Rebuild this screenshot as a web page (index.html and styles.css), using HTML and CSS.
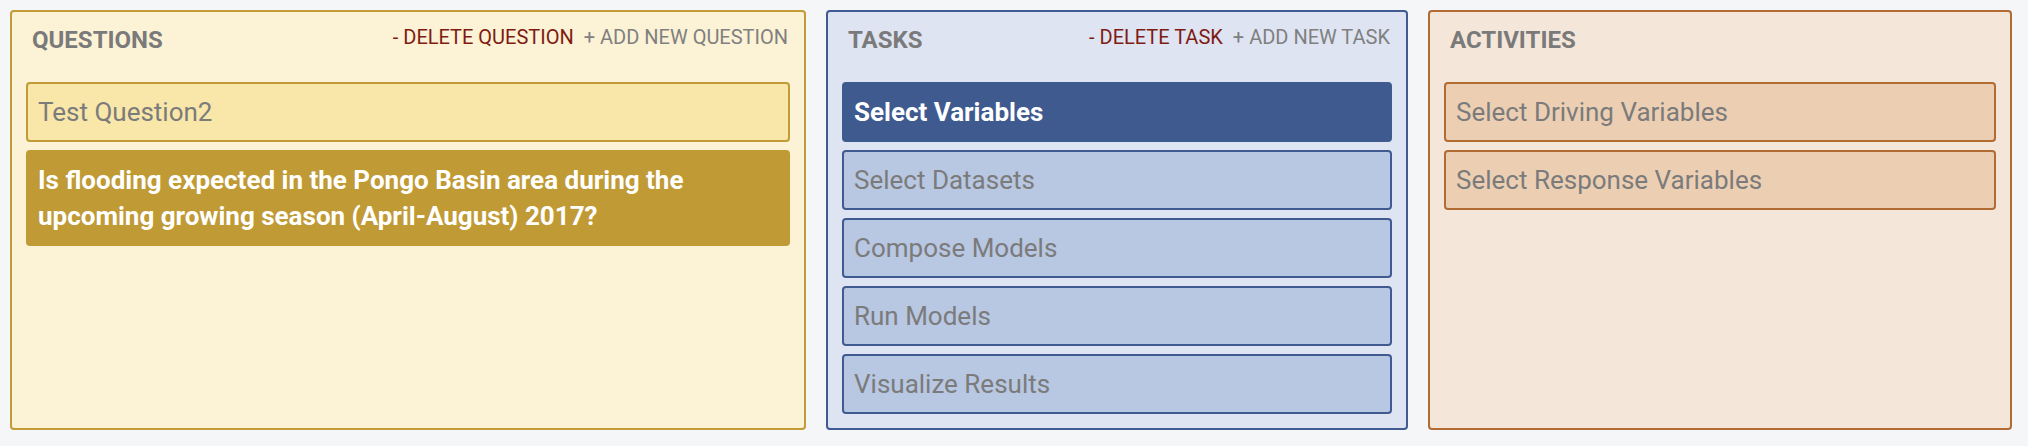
FILE: index.html
```html
<!DOCTYPE html>
<html>
<head>
<meta charset="utf-8">
<link rel="stylesheet" href="styles.css">
</head>
<body>
<div class="board">
  <section class="panel panel-questions">
    <div class="panel-header">
      <div class="panel-title">QUESTIONS</div>
      <div class="panel-actions">
        <span class="action action-delete">- DELETE QUESTION</span>
        <span class="action action-add">+ ADD NEW QUESTION</span>
      </div>
    </div>
    <div class="item-list">
      <div class="item">Test Question2</div>
      <div class="item item-active">Is flooding expected in the Pongo Basin area during the upcoming growing season (April-August) 2017?</div>
    </div>
  </section>
  <section class="panel panel-tasks">
    <div class="panel-header">
      <div class="panel-title">TASKS</div>
      <div class="panel-actions">
        <span class="action action-delete">- DELETE TASK</span>
        <span class="action action-add">+ ADD NEW TASK</span>
      </div>
    </div>
    <div class="item-list">
      <div class="item item-active">Select Variables</div>
      <div class="item">Select Datasets</div>
      <div class="item">Compose Models</div>
      <div class="item">Run Models</div>
      <div class="item">Visualize Results</div>
    </div>
  </section>
  <section class="panel panel-activities">
    <div class="panel-header">
      <div class="panel-title">ACTIVITIES</div>
    </div>
    <div class="item-list">
      <div class="item">Select Driving Variables</div>
      <div class="item">Select Response Variables</div>
    </div>
  </section>
</div>
</body>
</html>
```
FILE: styles.css
```css
html, body {
  margin: 0;
  padding: 0;
  background: #f4f6f8;
  font-family: Roboto, "Liberation Sans", Arial, sans-serif;
}

.board {
  display: flex;
  gap: 20px;
  padding: 10px 0 0 10px;
  align-items: flex-start;
}

.panel {
  box-sizing: border-box;
  height: 420px;
  border: 2px solid;
  border-radius: 4px;
  padding: 10px 14px 14px;
  display: flex;
  flex-direction: column;
}

.panel-questions { width: 796px; background: #fcf2d5; border-color: #c39b36; }
.panel-tasks { width: 582px; background: #dee4f2; border-color: #3f5b91; }
.panel-activities { width: 584px; background: #f4e6d9; border-color: #b26b32; }

.panel-header {
  display: flex;
  justify-content: space-between;
  align-items: flex-start;
  padding: 0 2px 0 6px;
  height: 36px;
  margin-bottom: 24px;
}

.panel-title {
  font-size: 24px;
  line-height: 36px;
  font-weight: 700;
  color: #7a7a7a;
}

.panel-actions {
  display: flex;
  gap: 10px;
  font-size: 20px;
  line-height: 30px;
}

.action-delete { color: #7e1b12; }
.action-add { color: #808080; }

.item-list {
  display: flex;
  flex-direction: column;
  gap: 8px;
}

.item {
  border: 2px solid;
  border-radius: 4px;
  padding: 10px;
  font-size: 26px;
  line-height: 36px;
  color: #7b7b7b;
}

.panel-questions .item { background: #f9e6a9; border-color: #c39b36; }
.panel-questions .item-active { background: #c09a34; border-color: #c09a34; color: #ffffff; font-weight: 700; }

.panel-tasks .item { background: #b8c7e2; border-color: #3f5b91; }
.panel-tasks .item-active { background: #3e5a8f; border-color: #3e5a8f; color: #ffffff; font-weight: 700; }

.panel-activities .item { background: #eccfb3; border-color: #b26b32; }
```
